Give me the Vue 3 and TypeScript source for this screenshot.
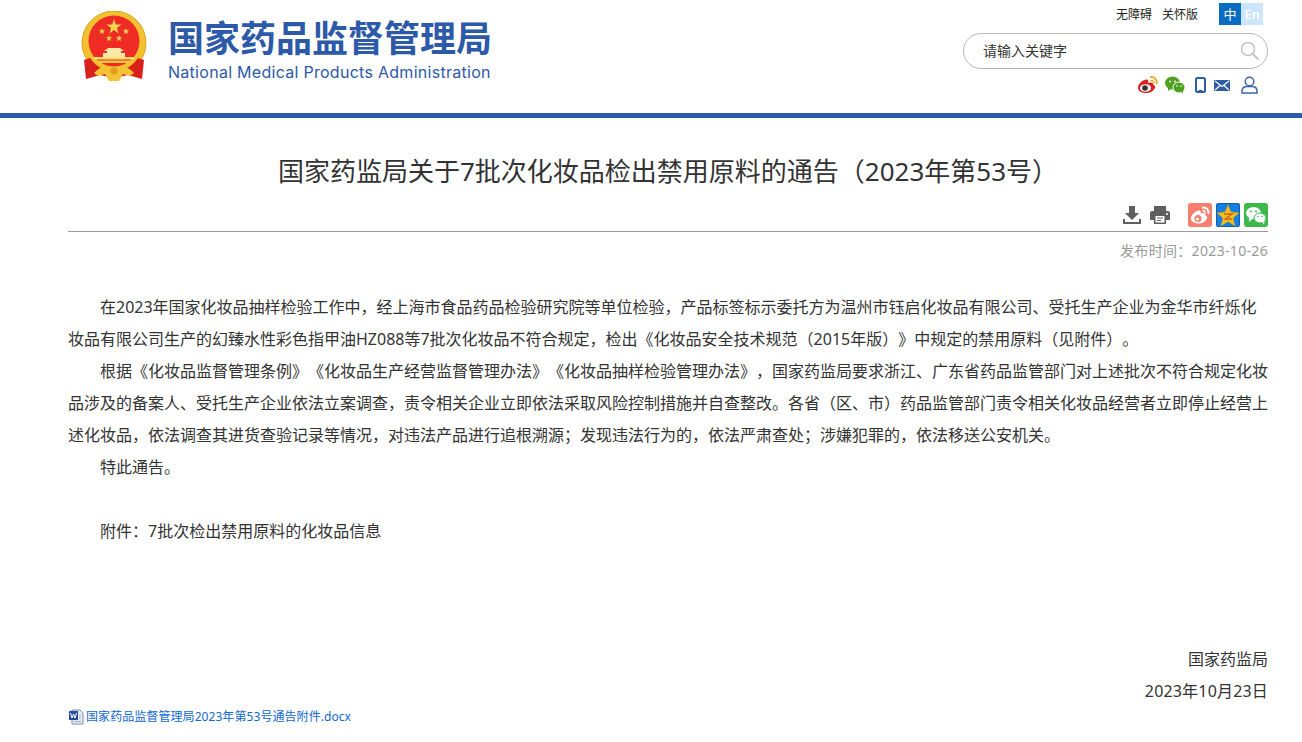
<script setup lang="ts">
const paragraphs: string[] = [
  '在2023年国家化妆品抽样检验工作中，经上海市食品药品检验研究院等单位检验，产品标签标示委托方为温州市钰启化妆品有限公司、受托生产企业为金华市纤烁化妆品有限公司生产的幻臻水性彩色指甲油HZ088等7批次化妆品不符合规定，检出《化妆品安全技术规范（2015年版）》中规定的禁用原料（见附件）。',
  '根据《化妆品监督管理条例》《化妆品生产经营监督管理办法》《化妆品抽样检验管理办法》，国家药监局要求浙江、广东省药品监管部门对上述批次不符合规定化妆品涉及的备案人、受托生产企业依法立案调查，责令相关企业立即依法采取风险控制措施并自查整改。各省（区、市）药品监管部门责令相关化妆品经营者立即停止经营上述化妆品，依法调查其进货查验记录等情况，对违法产品进行追根溯源；发现违法行为的，依法严肃查处；涉嫌犯罪的，依法移送公安机关。',
  '特此通告。',
]
</script>

<template>
  <div class="page">
    <header class="header">
      <div class="header-inner">
        <div class="brand">
          <svg class="emblem" viewBox="0 0 66 70" width="66" height="70">
            <circle cx="33" cy="32" r="32" fill="#f3c12f" stroke="#dfa11f" stroke-width="1" />
            <circle cx="33" cy="30" r="25.500" fill="#ee2b24" />
            <polygon points="33,8 34.800,13.500 40.500,13.500 35.900,16.900 37.600,22.400 33,19 28.400,22.400 30.100,16.900 25.500,13.500 31.200,13.500" fill="#f9d64c" />
            <polygon points="21,17 21.800,19.300 24.200,19.300 22.300,20.800 23,23.200 21,21.700 19,23.200 19.700,20.800 17.800,19.300 20.200,19.300" fill="#f9d64c" />
            <polygon points="45,17 45.800,19.300 48.200,19.300 46.300,20.800 47,23.200 45,21.700 43,23.200 43.700,20.800 41.800,19.300 44.200,19.300" fill="#f9d64c" />
            <polygon points="28,24 28.800,26.300 31.200,26.300 29.300,27.800 30,30.200 28,28.700 26,30.200 26.700,27.800 24.800,26.300 27.200,26.300" fill="#f9d64c" />
            <polygon points="38,24 38.800,26.300 41.200,26.300 39.300,27.800 40,30.200 38,28.700 36,30.200 36.700,27.800 34.800,26.300 37.200,26.300" fill="#f9d64c" />
            <path d="M27 37 H39 L43 40 H40 V42 H44 V46 H22 V42 H26 V40 H23Z" fill="#fbe7a6" />
            <rect x="13" y="46" width="40" height="2.500" fill="#fbe06e" />
            <rect x="17" y="49.500" width="32" height="2.500" fill="#f6c83a" />
            <path d="M3 49 L9 47 Q18 60 33 60 Q48 60 57 47 L63 49 L61 68 L47 64 L33 67 L19 64 L5 68Z" fill="#d9201d" />
            <path d="M13 62 Q22 52 33 58 Q44 52 53 62 L49 65 L42 63 L38 70 H28 L24 63 L17 65Z" fill="#f5c332" />
            <circle cx="33" cy="60" r="3.500" fill="#e29c1f" />
          </svg>
          <div class="brand-text">
            <div class="brand-cn">国家药品监督管理局</div>
            <div class="brand-en">National Medical Products Administration</div>
          </div>
        </div>
        <div class="tools">
          <div class="util">
            <span class="util-link">无障碍</span>
            <span class="util-link">关怀版</span>
            <div class="lang"><span class="lang-cn">中</span><span class="lang-en">En</span></div>
          </div>
          <div class="search">
            <span class="search-hint">请输入关键字</span>
            <svg viewBox="0 0 20 20" width="20" height="20" class="search-icon">
              <circle cx="8" cy="8" r="6.500" fill="none" stroke="#c4c4c4" stroke-width="1.500" />
              <path d="M12.500 12.800 L18.500 18.500" stroke="#c4c4c4" stroke-width="2" />
            </svg>
          </div>
          <div class="social">
            <svg class="ic-weibo" viewBox="0 0 21 18" width="21" height="18">
              <path d="M1 11.500 C1 7.500 7 3 10 3.500 C11.500 4 11.500 5.500 11 7 C14 5.800 16.500 6.500 16.500 9 C18 9.500 18.500 10.500 18 12 C16.500 15.500 12 17.500 8 17 C4 16.800 1 14.800 1 11.500Z" fill="#df1f1f" />
              <ellipse cx="8.500" cy="12" rx="5.500" ry="3.800" fill="#fff" />
              <circle cx="8" cy="12" r="2.800" fill="#333" />
              <path d="M13 1 Q20 0.500 20 8" fill="none" stroke="#f0a81c" stroke-width="1.800" />
              <path d="M13.500 4.500 Q17 4.500 17 7.500" fill="none" stroke="#f0a81c" stroke-width="1.500" />
            </svg>
            <svg class="ic-wechat" viewBox="0 0 20 18" width="20" height="18">
              <ellipse cx="7.500" cy="7" rx="7.500" ry="6.500" fill="#4fa11f" />
              <path d="M3 11 L3 15 L7 12Z" fill="#4fa11f" />
              <ellipse cx="14" cy="11.500" rx="6" ry="5.500" fill="#4fa11f" stroke="#fff" stroke-width="1" />
              <path d="M16 15 L18 18 L18 14Z" fill="#4fa11f" />
              <circle cx="5" cy="5.500" r="1" fill="#fff" />
              <circle cx="10" cy="5.500" r="1" fill="#fff" />
              <circle cx="12" cy="10" r="0.800" fill="#fff" />
              <circle cx="16" cy="10" r="0.800" fill="#fff" />
            </svg>
            <svg class="ic-phone" viewBox="0 0 11 16" width="11" height="16">
              <rect x="1" y="1" width="9" height="14" rx="1.500" fill="#fff" stroke="#2f5ca8" stroke-width="2" />
              <rect x="3.500" y="13" width="4" height="1" fill="#2f5ca8" />
            </svg>
            <svg class="ic-mail" viewBox="0 0 16 11" width="16" height="11">
              <rect width="16" height="11" rx="1" fill="#2f5ca8" />
              <path d="M1 1 L8 6.500 L15 1 M1 10 L6 5.500 M15 10 L10 5.500" fill="none" stroke="#fff" stroke-width="1.200" />
            </svg>
            <svg class="ic-user" viewBox="0 0 17 18" width="17" height="18">
              <circle cx="8.500" cy="5.500" r="4.300" fill="none" stroke="#3f63ad" stroke-width="1.500" />
              <path d="M1 17 V15 Q1 11 5.500 10.500 H11.500 Q16 11 16 15 V17Z" fill="none" stroke="#3f63ad" stroke-width="1.500" />
            </svg>
          </div>
        </div>
      </div>
    </header>

    <main class="article">
      <h1 class="title">国家药监局关于7批次化妆品检出禁用原料的通告（2023年第53号）</h1>
      <div class="actions">
        <svg viewBox="0 0 18 18" width="18" height="18">
          <path d="M6 0 H12 V7 H16 L9 14 L2 7 H6Z M0 13 H2 V16 H16 V13 H18 V18 H0Z" fill="#5f5f5f" />
        </svg>
        <svg viewBox="0 0 20 18" width="20" height="18" class="print">
          <path d="M4 0 H16 V5 H4Z M2 5 H18 Q20 5 20 7 V14 H16 V18 H4 V14 H0 V7 Q0 5 2 5Z" fill="#5f5f5f" />
          <rect x="5.500" y="10" width="9" height="6.500" fill="#fff" />
          <path d="M7 12 H13 M7 14.500 H11" stroke="#5f5f5f" stroke-width="1" />
          <circle cx="17" cy="8" r="1" fill="#fff" />
        </svg>
        <div class="share share-weibo">
          <svg viewBox="0 0 24 24" width="24" height="24">
            <path d="M3 15.500 C3 11.500 8.500 7 11.500 7.500 C13 8 13 9.500 12.500 10.500 C15.500 9.500 18 10.500 17.500 12.500 C19 13 19.500 14 19 15.500 C17.500 19 13.500 21 9.500 20.500 C6 20.300 3 18.500 3 15.500Z" fill="#fff" />
            <circle cx="10" cy="15.500" r="3.500" fill="#f47f6f" />
            <circle cx="9.500" cy="16" r="1.500" fill="#fff" />
            <path d="M14 4.500 Q21 4 20.500 11" fill="none" stroke="#fff" stroke-width="2" />
            <path d="M14.500 7.500 Q17.500 7.500 17 10.500" fill="none" stroke="#fff" stroke-width="1.500" />
          </svg>
        </div>
        <div class="share share-qzone">
          <svg viewBox="0 0 24 24" width="24" height="24">
            <polygon points="12,2 15,9 23,10 17,15 19,23 12,18.500 5,23 7,15 1,10 9,9" fill="#f7bd1d" stroke="#e09a14" stroke-width="0.500" />
            <path d="M8 11 H16 L9.500 16 H16" fill="none" stroke="#c6671c" stroke-width="1.500" />
          </svg>
        </div>
        <div class="share share-wechat">
          <svg viewBox="0 0 24 24" width="24" height="24">
            <ellipse cx="9.500" cy="10" rx="7.500" ry="6" fill="#fff" />
            <path d="M5 14 L5 19 L9 15.500Z" fill="#fff" />
            <ellipse cx="16" cy="15" rx="6" ry="5" fill="#fff" stroke="#3cb94a" stroke-width="1" />
            <path d="M18 18.500 L20 22 L20.500 17.500Z" fill="#fff" />
            <circle cx="7" cy="8.500" r="1" fill="#3cb94a" />
            <circle cx="12" cy="8.500" r="1" fill="#3cb94a" />
            <circle cx="14" cy="13.500" r="0.800" fill="#3cb94a" />
            <circle cx="18" cy="13.500" r="0.800" fill="#3cb94a" />
          </svg>
        </div>
      </div>
      <div class="date">发布时间：2023-10-26</div>
      <div class="body">
        <p v-for="(text, i) in paragraphs" :key="i" class="para">{{ text }}</p>
        <p class="para blank">&nbsp;</p>
        <p class="para">附件：7批次检出禁用原料的化妆品信息</p>
        <div class="sign">
          <p>国家药监局</p>
          <p class="sign-date">2023年10月23日</p>
        </div>
      </div>
      <a class="attachment">
        <svg viewBox="0 0 16 16" width="16" height="16">
          <path d="M4 1 H12 L15 4 V15 H4Z" fill="#e6ecf6" stroke="#7d8db0" stroke-width="1" />
          <rect x="1" y="2" width="9" height="9" fill="#2d4f9a" />
          <path d="M2.500 4 L4 9 L5.500 5 L7 9 L8.500 4" fill="none" stroke="#fff" stroke-width="1" />
          <path d="M6 12.500 H13 M11 9 H13 M11 6.500 H13" stroke="#9fb0cf" stroke-width="1" />
        </svg>
        <span>国家药品监督管理局2023年第53号通告附件.docx</span>
      </a>
    </main>
  </div>
</template>

<style scoped>
.page {
  width: 1302px;
  height: 742px;
  overflow: hidden;
  background: #fff;
  font-family: "Noto Sans", "Noto Sans CJK SC", sans-serif;
  text-spacing-trim: space-all;
  color: #333;
}
.header {
  height: 113px;
  border-bottom: 5px solid #2c59a8;
}
.header-inner {
  width: 1200px;
  margin-left: 68px;
  display: flex;
  justify-content: space-between;
}
.brand {
  display: flex;
  padding: 11px 0 0 13px;
}
.emblem {
  display: block;
}
.brand-text {
  margin: 6px 0 0 21px;
  color: #2c59a8;
}
.brand-cn {
  font-size: 36px;
  line-height: 44px;
  font-weight: 700;
  white-space: nowrap;
}
.brand-en {
  margin-top: 1px;
  font-family: Inter, "Liberation Sans", sans-serif;
  font-size: 16px;
  line-height: 20px;
  letter-spacing: 0.28px;
  white-space: nowrap;
}
.tools {
  width: 305px;
}
.util {
  display: flex;
  justify-content: flex-end;
  align-items: center;
  height: 22px;
  margin: 3px 5px 0 0;
  font-size: 12px;
  color: #222;
}
.util-link {
  margin-right: 10px;
}
.lang {
  display: flex;
  margin-left: 11px;
}
.lang span {
  width: 22px;
  height: 22px;
  line-height: 22px;
  text-align: center;
  color: #fff;
  font-size: 13px;
}
.lang-cn {
  background: #0a6cc0;
}
.lang .lang-en {
  background: #cce6ff;
  font-weight: 600;
}
.search {
  display: flex;
  align-items: center;
  justify-content: space-between;
  box-sizing: border-box;
  height: 36px;
  margin-top: 8px;
  padding: 0 7px 0 19px;
  border: 1px solid #b5b5b5;
  border-radius: 18px;
  font-size: 14px;
  color: #333;
}
.search-hint {
  padding-bottom: 2px;
}
.social {
  display: flex;
  justify-content: flex-end;
  align-items: center;
  height: 18px;
  margin: 7px 10px 0 0;
}
.ic-wechat {
  margin-left: 7px;
}
.ic-phone {
  margin-left: 10px;
}
.ic-mail {
  margin-left: 8px;
}
.ic-user {
  margin-left: 11px;
}
.article {
  width: 1200px;
  margin-left: 68px;
}
.title {
  margin: 0;
  padding-top: 35px;
  font-size: 26px;
  line-height: 36px;
  font-weight: 400;
  text-align: center;
  color: #333;
}
.actions {
  display: flex;
  justify-content: flex-end;
  align-items: center;
  height: 28px;
  margin-top: 12px;
  padding-bottom: 2px;
  border-bottom: 1px solid #999;
}
.print {
  margin: 0 0 0 9px;
}
.share {
  width: 24px;
  height: 24px;
  border-radius: 3px;
}
.share svg {
  display: block;
}
.share-weibo {
  margin-left: 18px;
  background: #f47f6f;
}
.share-qzone {
  margin-left: 4px;
  box-sizing: border-box;
  background: #1580e0;
  box-shadow: inset 0 0 0 1px #0f5fae;
}
.share-wechat {
  margin-left: 4px;
  background: #3cb94a;
}
.date {
  margin-top: 9px;
  font-size: 14px;
  line-height: 20px;
  letter-spacing: 0.33px;
  text-align: right;
  color: #999;
}
.body {
  margin-top: 30px;
  font-size: 16px;
  line-height: 32px;
  color: #333;
}
.para {
  margin: 0;
  text-indent: 32px;
}
.sign {
  margin-top: 96px;
  text-align: right;
}
.sign p {
  margin: 0;
}
.sign .sign-date {
  letter-spacing: 0.18px;
}
.attachment {
  display: flex;
  align-items: center;
  gap: 2px;
  margin-top: 2px;
  font-size: 12px;
  line-height: 16px;
  letter-spacing: 0.07px;
  color: #1269d3;
}
</style>
